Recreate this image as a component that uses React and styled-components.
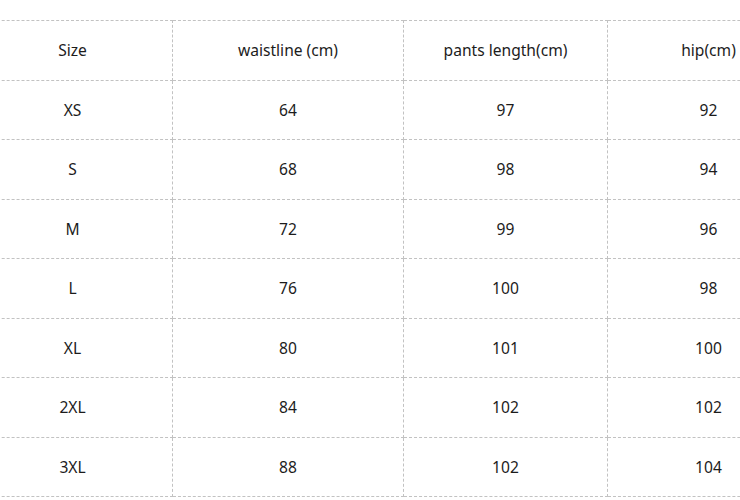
import React from 'react';
import styled, { createGlobalStyle } from 'styled-components';

const GlobalStyle = createGlobalStyle`
    html, body {
        margin: 0;
        padding: 0;
        background: #fff;
    }
`;

const Viewport = styled.div`
    width: 740px;
    height: 500px;
    overflow: hidden;
`;

const Wrapper = styled.div`
    padding-top: 20px;
    margin-left: -28px;
`;

const SizeTable = styled.table`
    border-collapse: collapse;
    table-layout: fixed;
    width: 837px;
    font-family: "Noto Sans", "Open Sans", sans-serif;
    font-size: 15.6px;
    color: #1c1c1c;
`;

const Cell = styled.td`
    border: 1px dashed #c2c2c2;
    height: 58.5px;
    padding: 0;
    text-align: center;
    vertical-align: middle;
    font-weight: normal;
`;

const columns = [
    { title: 'Size', width: 200 },
    { title: 'waistline (cm)', width: 231 },
    { title: 'pants length(cm)', width: 204 },
    { title: 'hip(cm)', width: 202 },
];

const rows = [
    ['XS', 64, 97, 92],
    ['S', 68, 98, 94],
    ['M', 72, 99, 96],
    ['L', 76, 100, 98],
    ['XL', 80, 101, 100],
    ['2XL', 84, 102, 102],
    ['3XL', 88, 102, 104],
];

const App = () => {
    return (
        <>
            <GlobalStyle />
            <Viewport>
                <Wrapper>
                    <SizeTable>
                        <colgroup>
                            {columns.map((c) => (
                                <col key={c.title} style={{ width: c.width }} />
                            ))}
                        </colgroup>
                        <tbody>
                            <tr>
                                {columns.map((c) => (
                                    <Cell key={c.title}>{c.title}</Cell>
                                ))}
                            </tr>
                            {rows.map((r) => (
                                <tr key={r[0]}>
                                    {r.map((v, i) => (
                                        <Cell key={i}>{v}</Cell>
                                    ))}
                                </tr>
                            ))}
                        </tbody>
                    </SizeTable>
                </Wrapper>
            </Viewport>
        </>
    );
};

export default App;
